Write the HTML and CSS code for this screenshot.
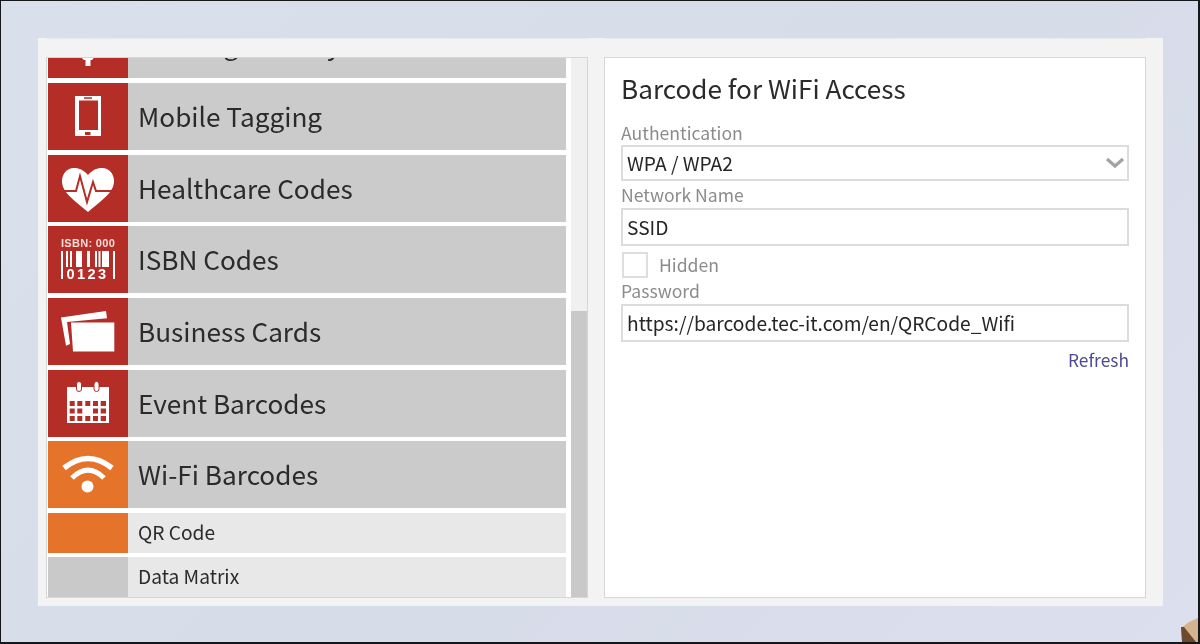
FILE: index.html
```html
<!DOCTYPE html>
<html lang="en">
<head>
<meta charset="utf-8">
<title>Barcode for WiFi Access</title>
<link rel="stylesheet" href="styles.css">
</head>
<body>
<div class="screen">
  <svg class="corner" viewBox="0 0 20 24" aria-hidden="true"><path d="M3 10 11 4 20 0V24H4Z" fill="#d4b48f"/><path d="M3 9H6L18 24H4Z" fill="#6e4a2c"/></svg>
  <main class="panel">
    <div class="col">
      <section class="box list-box">
        <div class="scroller">
          <a class="row"><span class="tile red">
            <svg viewBox="0 0 80 67" class="icon"><path d="M26 40H52L44 49H42.500V55H37.500V49H36Z" fill="#fff"/></svg>
          </span><span class="label">Banking and Payment</span></a>
          <a class="row"><span class="tile red">
            <svg viewBox="0 0 80 67" class="icon"><path fill="#fff" fill-rule="evenodd" d="M27 13h26v40H27zM31 17.500v29.500h19V17.500zM36 14.300v1.400h8v-1.400zM37 49v3h5.500v-3z"/></svg>
          </span><span class="label">Mobile Tagging</span></a>
          <a class="row"><span class="tile red">
            <svg viewBox="0 0 80 67" class="icon"><path fill="#fff" d="M40 20C35 14 30 13 26 13C18 13 14 20 14 26C14 36 22 42 40 57C58 42 66 36 66 26C66 20 62 13 54 13C50 13 45 14 40 20Z"/><path fill="none" stroke="#b52d27" stroke-width="2" d="M15 36H28L32 21L39 47L45 27L48 36H65"/></svg>
          </span><span class="label">Healthcare Codes</span></a>
          <a class="row"><span class="tile red">
            <svg viewBox="0 0 80 67" class="icon"><text x="13" y="21" class="isbn-top">ISBN: 000</text><path fill="#fff" d="M13 25h2v28h-2zM18 25h2v16h-2zM22 25h2v16h-2zM28 25h6v16h-6zM39 25h3v16h-3zM47 25h2v16h-2zM50.500 25h2v16h-2zM54 25h7v16h-7zM65 25h2v28h-2z"/><text x="18.500" y="53" class="isbn-num">0123</text></svg>
          </span><span class="label">ISBN Codes</span></a>
          <a class="row"><span class="tile red">
            <svg viewBox="0 0 80 67" class="icon"><path fill="#fff" d="M13 19.500 58 13l1 7.300-40 3.700 3 22-4 1.700zM23 24.500h43.300v29H25z"/></svg>
          </span><span class="label">Business Cards</span></a>
          <a class="row"><span class="tile red">
            <svg viewBox="0 0 80 67" class="icon"><path fill="#fff" fill-rule="evenodd" d="M19 17h42v36H19zM21.700 31v5h5v-5zM29.300 31v5h5v-5zM37.300 31v5h5v-5zM45 31v5h5v-5zM52.700 31v5h5.300v-5zM21.700 38.500v5h5v-5zM29.300 38.500v5h5v-5zM45 38.500v5h5v-5zM52.700 38.500v5h5.300v-5zM21.700 46v5h5v-5zM29.300 46v5h5v-5zM37.300 46v5h5v-5zM45 46v5h5v-5zM52.700 46v5h5.300v-5z"/><g fill="#fff" stroke="#b52d27"><rect x="28.500" y="11.500" width="5" height="10" rx="2.500"/><rect x="46" y="11.500" width="5" height="10" rx="2.500"/></g></svg>
          </span><span class="label">Event Barcodes</span></a>
          <a class="row"><span class="tile orange">
            <svg viewBox="0 0 80 67" class="icon"><g fill="none" stroke="#fff"><path stroke-width="5.500" d="M16 27Q40 8 64 27"/><path stroke-width="5" d="M24 37Q40 21 56 37"/></g><circle cx="39.500" cy="45.500" r="6" fill="#fff"/></svg>
          </span><span class="label">Wi-Fi Barcodes</span></a>
          <a class="row sub"><span class="tile orange-flat"></span><span class="label">QR Code</span></a>
          <a class="row sub sub-last"><span class="tile grey-flat"></span><span class="label">Data Matrix</span></a>
        </div>
        <div class="scrollbar"><div class="thumb"></div></div>
      </section>
    </div>
    <div class="col">
      <section class="box form-box">
        <h1 class="title">Barcode for WiFi Access</h1>
        <div class="field-label label-auth">Authentication</div>
        <div class="control select"><span>WPA / WPA2</span>
          <svg class="chevron" viewBox="0 0 20 12"><path d="M2 2l8 7 8-7" fill="none" stroke="#a3a3a3" stroke-width="3.200"/></svg>
        </div>
        <div class="field-label label-tall">Network Name</div>
        <div class="control input">SSID</div>
        <div class="check-row"><span class="checkbox"></span><span class="check-label">Hidden</span></div>
        <div class="field-label">Password</div>
        <div class="control input">https://barcode.tec-it.com/en/QRCode_Wifi</div>
        <div class="refresh-row"><a class="refresh">Refresh</a></div>
      </section>
    </div>
  </main>
</div>
</body>
</html>
```
FILE: styles.css
```css
* { box-sizing: border-box; }
html, body { margin: 0; height: 100%; }
body {
  width: 1200px;
  height: 644px;
  overflow: hidden;
  font-family: "Noto Sans CJK JP", "Noto Sans", sans-serif;
  color: #2b2b2b;
}
.screen {
  position: relative;
  width: 1200px;
  height: 644px;
  border: solid #15171c;
  border-width: 1px 2px 2px 1px;
  background: linear-gradient(135deg, #d9dfeb 0%, #d7dce9 55%, #dcdfee 100%);
  padding: 37px 36px 36px 37px;
}
.corner {
  position: absolute;
  right: 0;
  bottom: 0;
  width: 20px;
  height: 24px;
}
.panel {
  width: 1125px;
  height: 568px;
  background: #f3f3f4;
  padding: 0 16px 8px 8px;
  display: flex;
  gap: 16px;
  filter: blur(0.4px);
}
.col {
  width: 542px;
  border-top: 1px solid #e9ebeb;
  padding-top: 18px;
}
.box {
  width: 542px;
  height: 541px;
  border: 1px solid #d6d6d6;
}
.list-box {
  display: flex;
  background: #fff;
  padding-left: 1px;
}
.scroller {
  width: 518px;
  height: 100%;
  overflow: hidden;
  display: flex;
  flex-direction: column;
  justify-content: flex-end;
  gap: 4.670px;
}
.row {
  flex: none;
  display: flex;
  height: 67px;
  background: #cbcbcb;
}
.tile {
  flex: none;
  width: 80px;
  display: block;
}
.red { background: #b52d27; }
.orange { background: #e5742a; }
.orange-flat { background: #e5742a; }
.grey-flat { background: #c9c9c9; }
.icon { display: block; width: 80px; height: 67px; overflow: hidden; }
.isbn-top { font: 700 11px "Liberation Sans", sans-serif; fill: #f3dcda; letter-spacing: 0.3px; }
.isbn-num { font: 700 14.500px "Liberation Sans", sans-serif; fill: #fff; letter-spacing: 2.400px; }
.label {
  padding-left: 10px;
  font-size: 26.200px;
  line-height: 66px;
  white-space: nowrap;
}
.sub { height: 40px; background: #e8e8e8; }
.sub-last { margin-top: -0.670px; }
.sub .label { font-size: 19.200px; line-height: 39px; }
.scrollbar {
  width: 16px;
  margin-left: 5px;
  background: #f0f0f0;
  display: flex;
  flex-direction: column;
  justify-content: flex-end;
}
.thumb { height: 286px; background: #c9c9c9; }
.form-box {
  background: #fff;
  padding: 10px 16px 0 16px;
}
.title {
  margin: 0;
  font-weight: 400;
  font-size: 26.150px;
  line-height: 40px;
  color: #2b2b2b;
}
.field-label {
  font-size: 17.600px;
  line-height: 26px;
  color: #8b8b8b;
}
.label-tall { line-height: 27px; }
.label-auth { margin-top: 12px; line-height: 25px; }
.control {
  width: 508px;
  border: 2px solid #dcdcdc;
  font-size: 19.200px;
  padding-left: 4px;
  color: #262626;
  display: flex;
  align-items: center;
  white-space: nowrap;
}
.select { height: 36px; justify-content: space-between; }
.input { height: 38px; }
.chevron { width: 20px; height: 12px; margin-right: 2px; }
.check-row {
  display: flex;
  align-items: center;
  margin-top: 5px;
  height: 27px;
}
.checkbox {
  width: 26px;
  height: 26px;
  border: 2px solid #dedede;
  margin-left: 1px;
}
.check-label {
  margin-left: 11px;
  font-size: 17.600px;
  color: #8b8b8b;
}
.refresh-row {
  width: 508px;
  text-align: right;
  margin-top: 5px;
}
.refresh {
  font-size: 17.400px;
  line-height: 26px;
  color: #4f4a92;
}
```
